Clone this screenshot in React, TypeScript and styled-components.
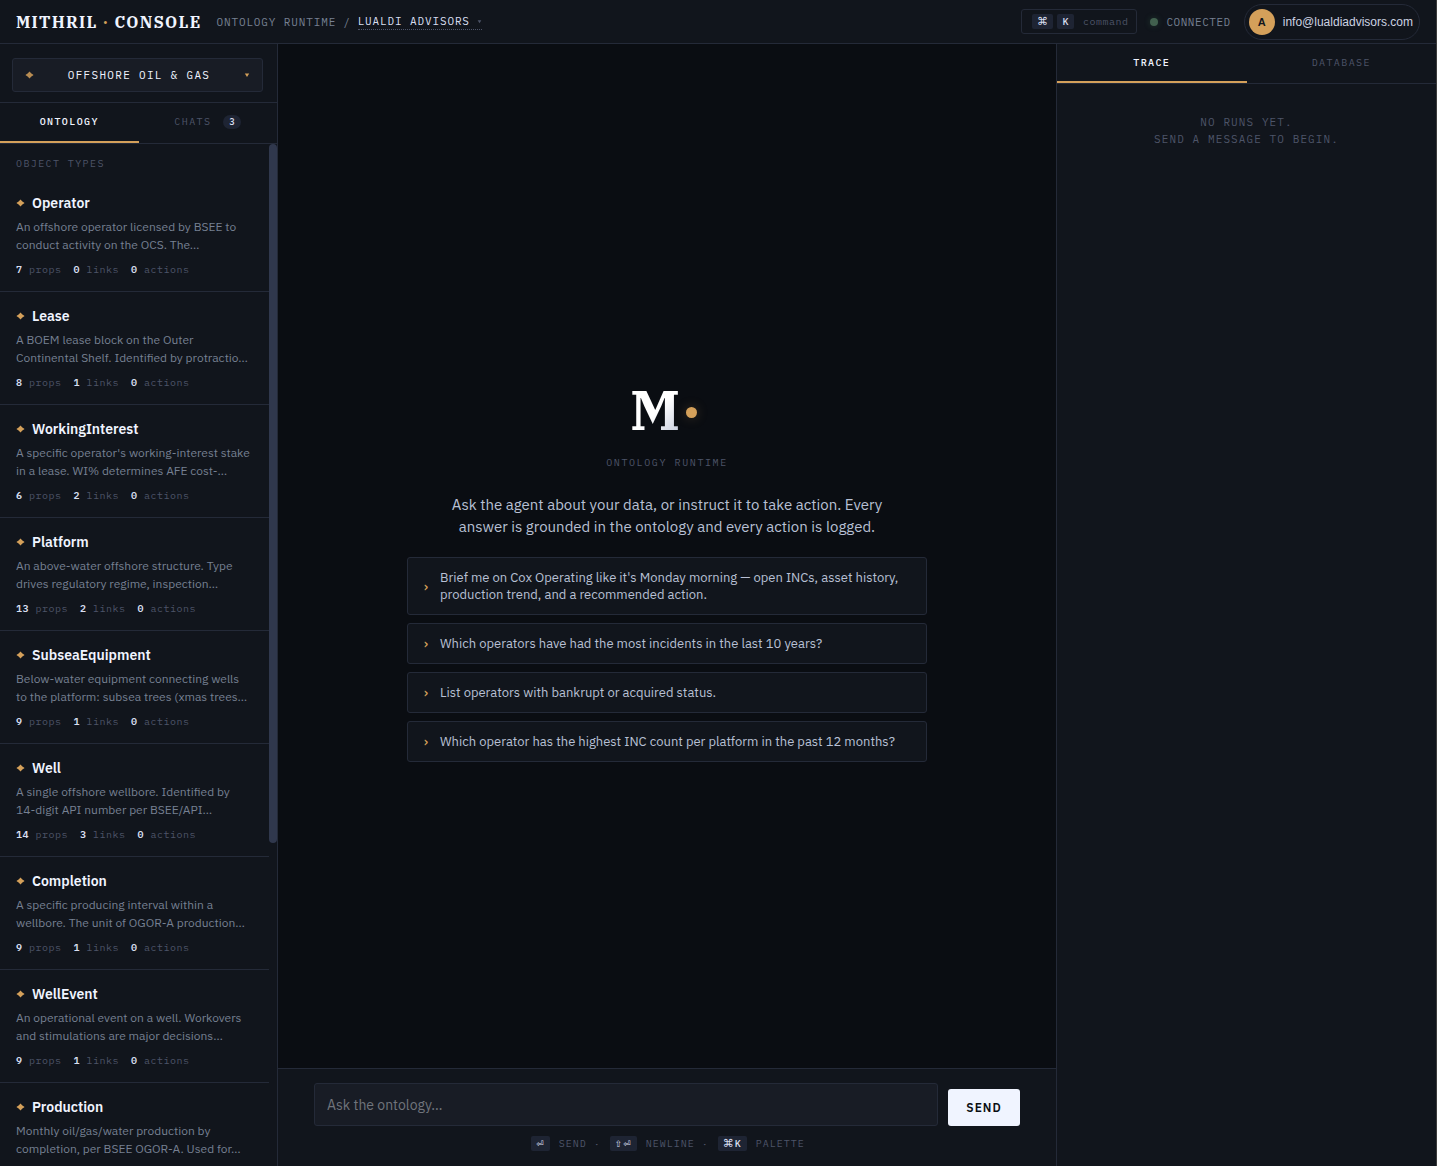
import React, { useState } from "react";
import styled, { createGlobalStyle, css } from "styled-components";

const c = {
  bg: "#0a0d12",
  panel: "#11151c",
  raised: "#181c25",
  chip: "#1e2433",
  line: "#242a38",
  thumb: "#30384d",
  white: "#f0f4ff",
  text: "#b8c0d4",
  muted: "#768092",
  dim: "#4d5468",
  amber: "#d4a05a",
  green: "#41604e",
};

const sans = `"IBM Plex Sans", Roboto, "Liberation Sans", sans-serif`;
const mono = `"IBM Plex Mono", "Liberation Mono", "DejaVu Sans Mono", monospace`;
const serif = `"IBM Plex Serif", "DejaVu Serif", serif`;

const Global = createGlobalStyle`
  *, *::before, *::after { box-sizing: border-box; }
  body { margin: 0; background: ${c.bg}; color: ${c.text}; font-family: ${sans}; }
  button, input, select { font: inherit; color: inherit; margin: 0; }
  button, select { cursor: pointer; }
  p, h1, h2, ul { margin: 0; padding: 0; }
`;

const Screen = styled.div`
  display: grid;
  grid-template-rows: 44px minmax(0, 1fr);
  height: 100vh;
  overflow: hidden;
  border-right: 1px solid #3c3c3c;
`;

/* ---------- header ---------- */

const Header = styled.header`
  display: flex;
  align-items: center;
  gap: 15px;
  padding: 0 16px;
  background: ${c.panel};
  border-bottom: 1px solid ${c.line};
`;

const Brand = styled.h1`
  font: 700 16px/20px ${serif};
  letter-spacing: 0.08em;
  color: ${c.white};
  white-space: nowrap;
  span { color: ${c.amber}; }
`;

const Crumbs = styled.nav`
  display: flex;
  align-items: center;
  gap: 7px;
  font: 11px/16px ${mono};
  letter-spacing: 0.08em;
  color: ${c.muted};
  white-space: nowrap;
`;

const Org = styled.label`
  display: flex;
  align-items: center;
  gap: 6px;
  border-bottom: 1px dotted ${c.dim};
  color: ${c.dim};
`;

const BareSelect = styled.select<{ $center?: boolean }>`
  appearance: none;
  border: 0;
  padding: 0;
  background: none;
  outline: none;
  letter-spacing: inherit;
  color: ${(p) => (p.$center ? c.white : "#d8dff0")};
  ${(p) => p.$center && css`flex: 1; min-width: 0; text-align-last: center;`}
`;

const Caret = styled.svg<{ $size: number }>`
  width: ${(p) => p.$size}px;
  height: ${(p) => p.$size}px;
  fill: currentColor;
  flex: none;
`;

const HeaderRight = styled.div`
  display: flex;
  align-items: center;
  gap: 13px;
  margin-left: auto;
`;

const Kbd = styled.kbd`
  display: inline-block;
  height: 15px;
  padding: 0 5px;
  border-radius: 2px;
  background: ${c.chip};
  color: #d8dff0;
  font: 500 10px/15px ${mono};
  letter-spacing: inherit;
  vertical-align: top;
`;

const Sym = styled.span<{ $small?: boolean }>`
  font-family: "DejaVu Sans", sans-serif;
  font-size: ${(p) => (p.$small ? 9 : 11)}px;
  line-height: 1;
`;

const Command = styled.button`
  display: flex;
  align-items: center;
  gap: 4px;
  height: 25px;
  padding: 0 8px 0 10px;
  border: 1px solid ${c.line};
  border-radius: 3px;
  background: ${c.panel};
  color: ${c.dim};
  font: 10px/15px ${mono};
  letter-spacing: 0.05em;
`;

const CommandText = styled.span`
  padding-left: 5px;
`;

const Status = styled.span`
  display: flex;
  align-items: center;
  gap: 8px;
  font: 11px/16px ${mono};
  letter-spacing: 0.05em;
  color: ${c.muted};
  &::before {
    content: "";
    width: 8px;
    height: 8px;
    border-radius: 50%;
    background: ${c.green};
    box-shadow: 0 0 6px rgba(74, 160, 100, 0.25);
  }
`;

const Account = styled.button`
  display: flex;
  align-items: center;
  gap: 8px;
  height: 36px;
  padding: 4px 6px 4px 4px;
  border: 1px solid ${c.line};
  border-radius: 18px;
  background: ${c.panel};
  color: #cdd3e2;
  font: 12px/16px "Liberation Sans", Arial, sans-serif;
`;

const Avatar = styled.span`
  display: grid;
  place-items: center;
  width: 26px;
  height: 26px;
  border-radius: 50%;
  background: ${c.amber};
  color: #11151c;
  font-size: 11px;
  font-weight: 700;
`;

/* ---------- columns ---------- */

const Columns = styled.div`
  display: grid;
  grid-template-columns: 278px minmax(0, 1fr) 380px;
  min-height: 0;
`;

const Side = styled.aside<{ $right?: boolean }>`
  display: flex;
  flex-direction: column;
  min-height: 0;
  background: ${c.panel};
  border: 0 solid ${c.line};
  ${(p) => (p.$right ? "border-left-width: 1px;" : "border-right-width: 1px;")}
`;

const PickerArea = styled.div`
  padding: 14px 14px 10px 12px;
  border-bottom: 1px solid ${c.line};
`;

const Picker = styled.label`
  display: flex;
  align-items: center;
  height: 34px;
  padding: 0 12px;
  border: 1px solid ${c.line};
  border-radius: 3px;
  background: ${c.raised};
  color: ${c.amber};
  font: 11px/16px ${mono};
  letter-spacing: 0.12em;
`;

const Tabs = styled.div<{ $h: number }>`
  display: grid;
  grid-template-columns: 1fr 1fr;
  height: ${(p) => p.$h}px;
  flex: none;
  border-bottom: 1px solid ${c.line};
`;

const Tab = styled.button<{ $on?: boolean }>`
  display: flex;
  align-items: center;
  justify-content: center;
  gap: 12px;
  padding: 0;
  border: 0;
  border-bottom: 2px solid ${(p) => (p.$on ? c.amber : "transparent")};
  background: none;
  color: ${(p) => (p.$on ? c.white : c.dim)};
  font: ${(p) => (p.$on ? 500 : 400)} 10px/16px ${mono};
  letter-spacing: 0.14em;
`;

const Count = styled.span`
  padding: 0 5px 0 6px;
  border-radius: 8px;
  background: ${c.chip};
  color: #d8dff0;
  font-size: 9px;
  font-weight: 500;
  line-height: 14px;
`;

const Scroller = styled.div`
  display: flex;
  flex: 1;
  min-height: 0;
`;

const List = styled.div`
  flex: 1;
  min-width: 0;
  overflow: hidden;
`;

const Thumb = styled.div`
  width: 8px;
  height: 68.4%;
  border-radius: 4px;
  background: ${c.thumb};
`;

const ListTitle = styled.h2`
  padding: 12px 16px 8px;
  font: 400 10px/15px ${mono};
  letter-spacing: 0.14em;
  color: ${c.dim};
`;

const Item = styled.article`
  padding: 14px 16px;
  border-bottom: 1px solid ${c.line};
`;

const Name = styled.h2`
  display: flex;
  align-items: center;
  gap: 7px;
  margin-bottom: 5px;
  font: 600 14px/20px ${sans};
  color: ${c.white};
`;

const Diamond = styled.svg<{ $soft?: boolean }>`
  width: 9px;
  height: 9px;
  fill: ${c.amber};
  flex: none;
  opacity: ${(p) => (p.$soft ? 0.85 : 1)};
`;

const Desc = styled.p`
  margin-bottom: 8px;
  font-size: 12px;
  line-height: 18px;
  white-space: pre;
  color: ${c.muted};
`;

const Meta = styled.div`
  display: flex;
  gap: 12px;
  font: 10px/15px ${mono};
  letter-spacing: 0.05em;
  color: ${c.dim};
  b { font-weight: 600; color: #d8dff0; }
`;

/* ---------- centre ---------- */

const Main = styled.main`
  display: flex;
  flex-direction: column;
  min-height: 0;
`;

const Hero = styled.section`
  display: flex;
  flex: 1;
  flex-direction: column;
  align-items: center;
  justify-content: center;
`;

const Mark = styled.div`
  display: flex;
  align-items: center;
  gap: 6px;
  height: 105px;
  padding: 20px 7px 0 0;
`;

const Letter = styled.span`
  padding-bottom: 8px;
  font: 700 56px/60px ${serif};
  background: linear-gradient(135deg, #ffffff 50%, #b4bdd4);
  background-clip: text;
  color: transparent;
`;

const Dot = styled.span`
  width: 11px;
  height: 11px;
  border-radius: 50%;
  background: ${c.amber};
  box-shadow: 0 0 12px rgba(212, 160, 90, 0.25);
`;

const Tagline = styled.p`
  font: 10px/16px ${mono};
  letter-spacing: 0.16em;
  color: ${c.dim};
`;

const Intro = styled.p`
  max-width: 450px;
  margin: 23px 0 19px;
  font-size: 15px;
  line-height: 22px;
  text-align: center;
  color: ${c.text};
`;

const Prompts = styled.div`
  display: flex;
  flex-direction: column;
  gap: 8px;
  width: 100%;
  max-width: 520px;
`;

const Prompt = styled.button`
  display: flex;
  align-items: center;
  gap: 10px;
  padding: 11px 16px 11px 14px;
  border: 1px solid ${c.line};
  border-radius: 3px;
  background: ${c.panel};
  color: ${c.text};
  font-size: 13px;
  line-height: 17px;
  text-align: left;
  &::before {
    content: "›";
    width: 8px;
    flex: none;
    color: ${c.amber};
    font-family: ${mono};
    font-weight: 500;
  }
`;

const Composer = styled.form`
  padding: 14px 36px 15px;
  border-top: 1px solid ${c.line};
  background: ${c.panel};
`;

const Entry = styled.div`
  display: flex;
  align-items: flex-end;
  gap: 10px;
`;

const Ask = styled.input`
  flex: 1;
  min-width: 0;
  height: 43px;
  padding: 0 12px;
  border: 1px solid ${c.line};
  border-radius: 3px;
  background: ${c.raised};
  color: ${c.white};
  font-size: 14px;
  outline: none;
  &::placeholder { color: #70747c; }
`;

const Send = styled.button`
  width: 72px;
  height: 37px;
  padding: 0;
  border: 0;
  border-radius: 3px;
  background: ${c.white};
  color: ${c.bg};
  font-size: 12px;
  font-weight: 600;
  letter-spacing: 0.08em;
`;

const Hints = styled.p`
  margin-top: 10px;
  font: 10px/15px ${mono};
  letter-spacing: 0.1em;
  text-align: center;
  color: ${c.dim};
  ${Kbd} { margin: 0 2px; }
`;

const Empty = styled.p`
  padding: 30px 20px;
  font: 11px/17px ${mono};
  letter-spacing: 0.1em;
  text-align: center;
  color: ${c.dim};
`;

const types: [string, string, number, number, number][] = [
  ["Operator", "An offshore operator licensed by BSEE to\nconduct activity on the OCS. The…", 7, 0, 0],
  ["Lease", "A BOEM lease block on the Outer\nContinental Shelf. Identified by protractio…", 8, 1, 0],
  ["WorkingInterest", "A specific operator's working-interest stake\nin a lease. WI% determines AFE cost-…", 6, 2, 0],
  ["Platform", "An above-water offshore structure. Type\ndrives regulatory regime, inspection…", 13, 2, 0],
  ["SubseaEquipment", "Below-water equipment connecting wells\nto the platform: subsea trees (xmas trees…", 9, 1, 0],
  ["Well", "A single offshore wellbore. Identified by\n14-digit API number per BSEE/API…", 14, 3, 0],
  ["Completion", "A specific producing interval within a\nwellbore. The unit of OGOR-A production…", 9, 1, 0],
  ["WellEvent", "An operational event on a well. Workovers\nand stimulations are major decisions…", 9, 1, 0],
  ["Production", "Monthly oil/gas/water production by\ncompletion, per BSEE OGOR-A. Used for…", 0, 0, 0],
];

const prompts = [
  "Brief me on Cox Operating like it's Monday morning — open INCs, asset history, production trend, and a recommended action.",
  "Which operators have had the most incidents in the last 10 years?",
  "List operators with bankrupt or acquired status.",
  "Which operator has the highest INC count per platform in the past 12 months?",
];

const DiamondIcon = ({ soft }: { soft?: boolean }) => (
  <Diamond $soft={soft} viewBox="0 0 9 9" aria-hidden="true">
    <path d="M4.5 0.6 6.4 2.5 8.6 4 6.4 5.6 4.5 7.5 2.6 5.6 0.4 4 2.6 2.5z" />
  </Diamond>
);

const CaretIcon = ({ size }: { size: number }) => (
  <Caret $size={size} viewBox="0 0 6 6" aria-hidden="true">
    <path d="M0.8 1.5h4.4L3 5z" />
  </Caret>
);

export default function App() {
  const [draft, setDraft] = useState("");
  return (
    <Screen>
      <Global />
      <Header>
        <Brand>MITHRIL <span>·</span> CONSOLE</Brand>
        <Crumbs>
          <span>ONTOLOGY RUNTIME</span>
          <span>/</span>
          <Org>
            <BareSelect aria-label="Organisation">
              <option>LUALDI ADVISORS</option>
            </BareSelect>
            <CaretIcon size={5} />
          </Org>
        </Crumbs>
        <HeaderRight>
          <Command type="button">
            <Kbd><Sym>⌘</Sym></Kbd>
            <Kbd>K</Kbd>
            <CommandText>command</CommandText>
          </Command>
          <Status>CONNECTED</Status>
          <Account type="button">
            <Avatar>A</Avatar>
            info@lualdiadvisors.com
          </Account>
        </HeaderRight>
      </Header>
      <Columns>
        <Side>
          <PickerArea>
            <Picker>
              <DiamondIcon soft />
              <BareSelect $center aria-label="Ontology">
                <option>OFFSHORE OIL &amp; GAS</option>
              </BareSelect>
              <CaretIcon size={6} />
            </Picker>
          </PickerArea>
          <Tabs $h={41} role="tablist">
            <Tab $on role="tab" aria-selected="true">ONTOLOGY</Tab>
            <Tab role="tab" aria-selected="false">CHATS <Count>3</Count></Tab>
          </Tabs>
          <Scroller>
            <List>
              <ListTitle>OBJECT TYPES</ListTitle>
              {types.map(([name, desc, props, links, actions]) => (
                <Item key={name}>
                  <Name><DiamondIcon />{name}</Name>
                  <Desc>{desc}</Desc>
                  {props > 0 && (
                    <Meta>
                      <span><b>{props}</b> props</span>
                      <span><b>{links}</b> links</span>
                      <span><b>{actions}</b> actions</span>
                    </Meta>
                  )}
                </Item>
              ))}
            </List>
            <Thumb />
          </Scroller>
        </Side>
        <Main>
          <Hero>
            <Mark><Letter>M</Letter><Dot /></Mark>
            <Tagline>ONTOLOGY RUNTIME</Tagline>
            <Intro>
              Ask the agent about your data, or instruct it to take action. Every answer is grounded in the
              ontology and every action is logged.
            </Intro>
            <Prompts>
              {prompts.map((p) => (
                <Prompt key={p} type="button" onClick={() => setDraft(p)}>{p}</Prompt>
              ))}
            </Prompts>
          </Hero>
          <Composer onSubmit={(e) => e.preventDefault()}>
            <Entry>
              <Ask
                aria-label="Ask the ontology"
                placeholder="Ask the ontology…"
                value={draft}
                onChange={(e) => setDraft(e.target.value)}
              />
              <Send type="submit">SEND</Send>
            </Entry>
            <Hints>
              <Kbd><Sym $small>⏎</Sym></Kbd> SEND · <Kbd><Sym $small>⇧⏎</Sym></Kbd> NEWLINE ·{" "}
              <Kbd><Sym>⌘</Sym>K</Kbd> PALETTE
            </Hints>
          </Composer>
        </Main>
        <Side $right>
          <Tabs $h={40} role="tablist">
            <Tab $on role="tab" aria-selected="true">TRACE</Tab>
            <Tab role="tab" aria-selected="false">DATABASE</Tab>
          </Tabs>
          <Empty>
            NO RUNS YET.
            <br />
            SEND A MESSAGE TO BEGIN.
          </Empty>
        </Side>
      </Columns>
    </Screen>
  );
}
